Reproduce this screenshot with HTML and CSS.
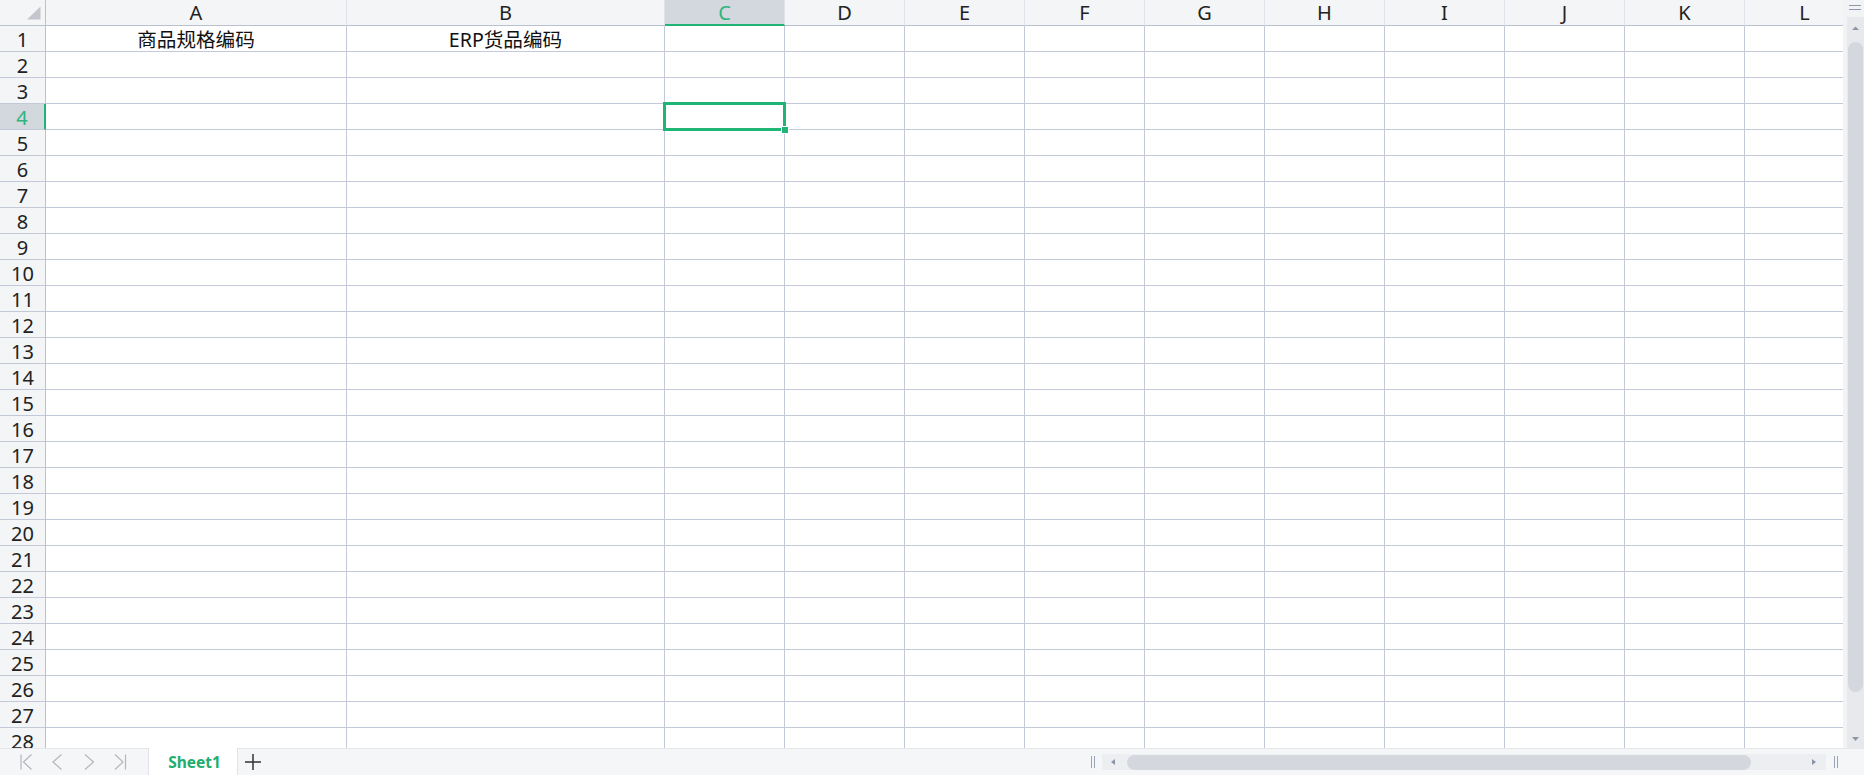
FILE: index.html
```html
<!DOCTYPE html>
<html>
<head>
<meta charset="utf-8">
<link rel="stylesheet" href="styles.css">
</head>
<body>
<div class="app">
  <div class="main">
    <div class="grid">
      <div class="rowhead">
        <div class="corner"><svg width="46" height="26" viewBox="0 0 46 26"><polygon points="40.5,6.5 40.5,19.5 27,19.5" fill="#c3c6cc"/></svg></div>
        <div class="rn">1</div>
        <div class="rn">2</div>
        <div class="rn">3</div>
        <div class="rn sel">4</div>
        <div class="rn">5</div>
        <div class="rn">6</div>
        <div class="rn">7</div>
        <div class="rn">8</div>
        <div class="rn">9</div>
        <div class="rn">10</div>
        <div class="rn">11</div>
        <div class="rn">12</div>
        <div class="rn">13</div>
        <div class="rn">14</div>
        <div class="rn">15</div>
        <div class="rn">16</div>
        <div class="rn">17</div>
        <div class="rn">18</div>
        <div class="rn">19</div>
        <div class="rn">20</div>
        <div class="rn">21</div>
        <div class="rn">22</div>
        <div class="rn">23</div>
        <div class="rn">24</div>
        <div class="rn">25</div>
        <div class="rn">26</div>
        <div class="rn">27</div>
        <div class="rn">28</div>
      </div>
      <div class="col col-a"><div class="ch">A</div><div class="cells"><div class="cell">商品规格编码</div></div></div>
      <div class="col col-b"><div class="ch">B</div><div class="cells"><div class="cell">ERP货品编码</div></div></div>
      <div class="col"><div class="ch sel">C</div><div class="cells"></div></div>
      <div class="col"><div class="ch">D</div><div class="cells"></div></div>
      <div class="col"><div class="ch">E</div><div class="cells"></div></div>
      <div class="col"><div class="ch">F</div><div class="cells"></div></div>
      <div class="col"><div class="ch">G</div><div class="cells"></div></div>
      <div class="col"><div class="ch">H</div><div class="cells"></div></div>
      <div class="col"><div class="ch">I</div><div class="cells"></div></div>
      <div class="col"><div class="ch">J</div><div class="cells"></div></div>
      <div class="col"><div class="ch">K</div><div class="cells"></div></div>
      <div class="col"><div class="ch">L</div><div class="cells"></div></div>
      <div class="selection"><span class="handle"></span></div>
    </div>
    <div class="vscroll">
      <div class="vcap"><svg width="17" height="17" viewBox="0 0 17 17"><path d="M2 5.5H14M2 9.5H14" stroke="#8d97aa" stroke-width="1.2"/></svg></div>
      <div class="vtrack">
        <div class="vbtn"><svg width="17" height="24" viewBox="0 0 17 24"><polygon points="5,13 12,13 8.5,9.5" fill="#8d97aa"/></svg></div>
        <div class="vthumb"></div>
        <div class="vfill"></div>
        <div class="vbtn vbtn-down"><svg width="17" height="18" viewBox="0 0 17 18"><polygon points="5,7 12,7 8.5,11" fill="#8d97aa"/></svg></div>
      </div>
    </div>
  </div>
  <div class="bottombar">
    <div class="nav">
      <svg class="nav-first" width="16" height="18" viewBox="0 0 16 18"><path d="M2 1.5V16.5M12.5 1.5L4.5 9L12.5 16.5" fill="none" stroke="#b3b6bc" stroke-width="1.2"/></svg>
      <svg class="nav-prev" width="16" height="18" viewBox="0 0 16 18"><path d="M11.5 1.5L3 9L11.5 16.5" fill="none" stroke="#b3b6bc" stroke-width="1.2"/></svg>
      <svg class="nav-next" width="16" height="18" viewBox="0 0 16 18"><path d="M3 1.5L11.5 9L3 16.5" fill="none" stroke="#b3b6bc" stroke-width="1.2"/></svg>
      <svg class="nav-last" width="16" height="18" viewBox="0 0 16 18"><path d="M2 1.5L10 9L2 16.5M12.5 1.5V16.5" fill="none" stroke="#b3b6bc" stroke-width="1.2"/></svg>
    </div>
    <div class="tab">Sheet1</div>
    <svg class="add" width="18" height="18" viewBox="0 0 18 18"><path d="M9 1V17M1 9H17" stroke="#333" stroke-width="1.5"/></svg>
    <div class="spacer"></div>
    <div class="hscroll">
      <svg class="grip" width="10" height="16" viewBox="0 0 10 16"><path d="M3.5 2V14M6.5 2V14" stroke="#9aa3b6" stroke-width="1"/></svg>
      <div class="htrack">
        <div class="hbtn"><svg width="25" height="16" viewBox="0 0 25 16"><polygon points="13,5 13,11 9,8" fill="#8b95a8"/></svg></div>
        <div class="hthumb"></div>
        <div class="hfill"></div>
        <div class="hbtn"><svg width="20" height="16" viewBox="0 0 20 16"><polygon points="6,5 6,11 10,8" fill="#8b95a8"/></svg></div>
      </div>
      <svg class="grip" width="10" height="16" viewBox="0 0 10 16"><path d="M3.5 2V14M6.5 2V14" stroke="#9aa3b6" stroke-width="1"/></svg>
    </div>
  </div>
</div>
</body>
</html>
```
FILE: styles.css
```css
* { box-sizing: border-box; }
html, body { margin: 0; padding: 0; }
body {
  width: 1864px;
  height: 775px;
  overflow: hidden;
  background: #fff;
  font-family: "Noto Sans", "Noto Sans CJK SC", sans-serif;
  color: #111;
}
.app { width: 1864px; height: 775px; display: flex; flex-direction: column; }
.main { display: flex; height: 748px; }
.grid {
  position: relative;
  width: 1843px;
  height: 748px;
  display: flex;
  overflow: hidden;
  flex: 0 0 auto;
}
.rowhead { flex: 0 0 46px; width: 46px; display: flex; flex-direction: column; }
.corner {
  height: 26px;
  flex: 0 0 26px;
  background: #f4f5f7;
  border-bottom: 1px solid #b9c0cf;
  border-right: 1px solid #b9c0cf;
}
.corner svg { display: block; }
.rn {
  flex: 0 0 26px;
  height: 26px;
  background: #f4f5f7;
  border-bottom: 1px solid #c3c9d8;
  border-right: 1px solid #b9c0cf;
  text-align: center;
  font-size: 20px;
  line-height: 24px;
  padding-top: 2px;
  color: #222;
}
.rn.sel { background: #d3d7de; border-right: 2px solid #1fb574; color: #2fb57d; }
.col { flex: 0 0 120px; width: 120px; display: flex; flex-direction: column; }
.col-a { flex-basis: 301px; width: 301px; }
.col-b { flex-basis: 318px; width: 318px; }
.ch {
  flex: 0 0 26px;
  height: 26px;
  background: #f4f5f7;
  border-bottom: 1px solid #b9c0cf;
  border-right: 1px solid #dfe2e9;
  text-align: center;
  font-size: 20px;
  line-height: 24px;
  padding-top: 1px;
  color: #222;
}
.ch.sel { background: #d3d7de; border-bottom: 2px solid #1fb574; color: #2fb57d; }
.cells {
  flex: 1;
  border-right: 1px solid #c3c9d8;
  background: repeating-linear-gradient(to bottom, #fff 0, #fff 25px, #c3c9d8 25px, #c3c9d8 26px);
}
.cell {
  height: 25px;
  text-align: center;
  font-size: 19.6px;
  line-height: 24px;
  padding-top: 2px;
  color: #111;
  white-space: nowrap;
}
.selection {
  position: absolute;
  left: 663px;
  top: 102px;
  width: 123px;
  height: 29px;
  border: 3px solid #1fb574;
}
.handle {
  position: absolute;
  left: 116px;
  top: 22px;
  width: 6px;
  height: 6px;
  background: #1fb574;
  box-shadow: 0 0 0 1px #fff;
}
.vscroll {
  flex: 0 0 21px;
  width: 21px;
  height: 748px;
  background: #f2f3f5;
  display: flex;
  flex-direction: column;
}
.vcap { height: 17px; flex: 0 0 17px; padding-left: 4px; }
.vcap svg { display: block; }
.vtrack {
  flex: 1;
  margin-left: 4px;
  background: #e8e9ed;
  display: flex;
  flex-direction: column;
  align-items: center;
}
.vbtn svg { display: block; }
.vthumb {
  width: 15px;
  height: 650px;
  margin-top: 1px;
  border-radius: 8px;
  background: #d4d7de;
}
.vfill { flex: 1; }
.bottombar {
  height: 27px;
  flex: 0 0 27px;
  background: #f5f6f8;
  display: flex;
  align-items: stretch;
  border-top: 1px solid #e4e6ea;
}
.nav { width: 148px; flex: 0 0 148px; display: flex; align-items: center; padding-left: 19px; }
.nav svg { display: block; flex: 0 0 16px; }
.nav-prev { margin-left: 15px; }
.nav-next { margin-left: 16px; }
.nav-last { margin-left: 15px; }
.tab {
  width: 90px;
  flex: 0 0 90px;
  margin-top: -1px;
  background: #fff;
  border-right: 1px solid #e1e3e8;
  border-left: 1px solid #e1e3e8;
  text-align: center;
  font-size: 15.5px;
  font-weight: 700;
  color: #1fae6d;
  line-height: 27px;
  padding-top: 1px;
  padding-left: 3px;
}
.add { display: block; margin-left: 6px; align-self: center; }
.spacer { flex: 1; }
.hscroll { width: 776px; flex: 0 0 776px; display: flex; align-items: center; }
.grip { display: block; flex: 0 0 10px; }
.hscroll .grip:first-child { margin-right: 4px; }
.hscroll .grip:last-child { margin-left: 5px; }
.htrack {
  width: 724px;
  flex: 0 0 724px;
  height: 16px;
  background: #eceef1;
  display: flex;
  align-items: center;
}
.hbtn svg { display: block; }
.hthumb {
  width: 624px;
  height: 15px;
  border-radius: 8px;
  background: #d4d7de;
}
.hfill { flex: 1; }
```
